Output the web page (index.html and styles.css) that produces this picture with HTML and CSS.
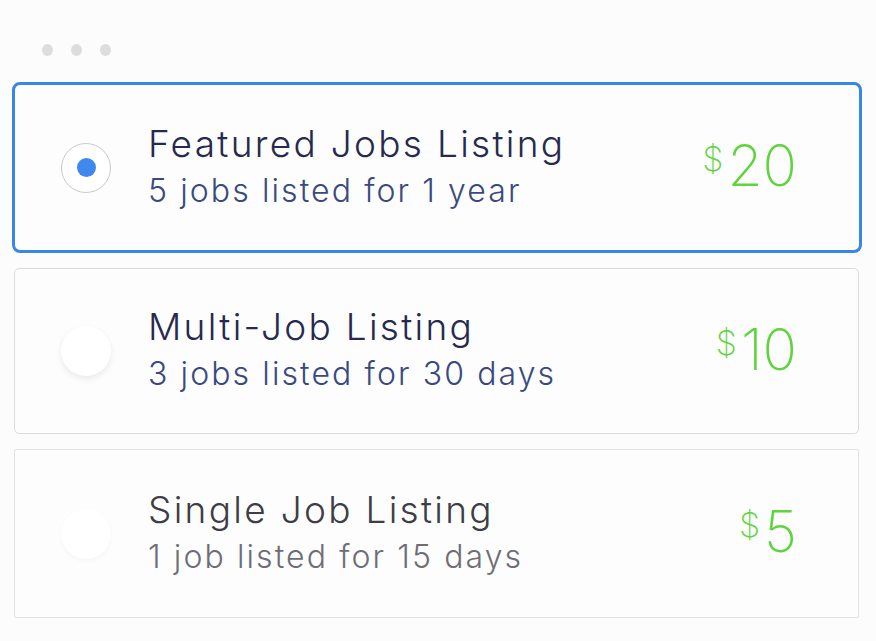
FILE: index.html
```html
<!DOCTYPE html>
<html>
<head>
<meta charset="utf-8">
<link rel="stylesheet" href="styles.css">
</head>
<body>
<div class="window">
  <div class="dots"><span></span><span></span><span></span></div>
  <div class="list">
    <div class="card selected">
      <div class="radio on"><span class="dot"></span></div>
      <div class="text">
        <div class="title">Featured Jobs Listing</div>
        <div class="sub">5 jobs listed for 1 year</div>
      </div>
      <div class="price"><span class="cur">$</span>20</div>
    </div>
    <div class="card">
      <div class="radio"></div>
      <div class="text">
        <div class="title">Multi-Job Listing</div>
        <div class="sub">3 jobs listed for 30 days</div>
      </div>
      <div class="price"><span class="cur">$</span>10</div>
    </div>
    <div class="card faded">
      <div class="radio faint"></div>
      <div class="text">
        <div class="title">Single Job Listing</div>
        <div class="sub">1 job listed for 15 days</div>
      </div>
      <div class="price"><span class="cur">$</span>5</div>
    </div>
  </div>
</div>
</body>
</html>
```
FILE: styles.css
```css
html, body {
  margin: 0;
  padding: 0;
  background: #fcfcfc;
}
body {
  font-family: "Inter", "Open Sans", sans-serif;
  width: 876px;
  height: 641px;
  overflow: hidden;
}
.window {
  padding: 44px 14px 0 12px;
}
.dots {
  display: flex;
  gap: 18px;
  padding-left: 30px;
  height: 12px;
  margin-bottom: 26px;
}
.dots span {
  width: 11px;
  height: 12px;
  border-radius: 50%;
  background: #dcdddd;
}
.list {
  display: flex;
  flex-direction: column;
  gap: 15px;
}
.card {
  display: flex;
  align-items: center;
  background: #fdfdfd;
  border: 1px solid #dcdcdc;
  border-radius: 5px;
  height: 166px;
  margin: 0 3px 0 2px;
  padding: 0 61px 0 46px;
  box-sizing: border-box;
}
.card.selected {
  border: 3px solid #3a86e8;
  border-radius: 8px;
  height: 171px;
  margin: 0;
  padding: 0 62px 0 46px;
}
.card.faded {
  height: 169px;
  border-color: #e2e2e2;
  border-radius: 2px;
  background: #fdfdfd;
}
.radio {
  width: 50px;
  height: 50px;
  border-radius: 50%;
  background: #fff;
  box-sizing: border-box;
  display: flex;
  align-items: center;
  justify-content: center;
  flex: none;
  box-shadow: 0 3px 6px rgba(0,0,0,0.08);
}
.radio.on {
  border: 1px solid #c9c9c9;
  box-shadow: none;
}
.radio.faint {
  box-shadow: 0 2px 4px rgba(0,0,0,0.03);
}
.radio .dot {
  width: 19px;
  height: 19px;
  border-radius: 50%;
  background: #3f88ec;
}
.text {
  flex: 1;
  margin-left: 37px;
  margin-top: -2px;
}
.title {
  font-size: 37px;
  font-weight: 300;
  color: #272a4e;
  line-height: 48px;
  letter-spacing: 2.3px;
}
.sub {
  font-size: 32px;
  font-weight: 300;
  color: #3a4a7e;
  line-height: 46px;
  letter-spacing: 2.1px;
}
.faded .title {
  color: #3e3e46;
}
.faded .sub {
  color: #6e6e76;
}
.price {
  font-size: 57px;
  font-weight: 200;
  color: #5fd43c;
  line-height: 1;
  display: flex;
  align-items: flex-start;
  margin-top: -4px;
}
.price .cur {
  font-size: 34px;
  margin-right: 4px;
  margin-top: 5px;
}
```
